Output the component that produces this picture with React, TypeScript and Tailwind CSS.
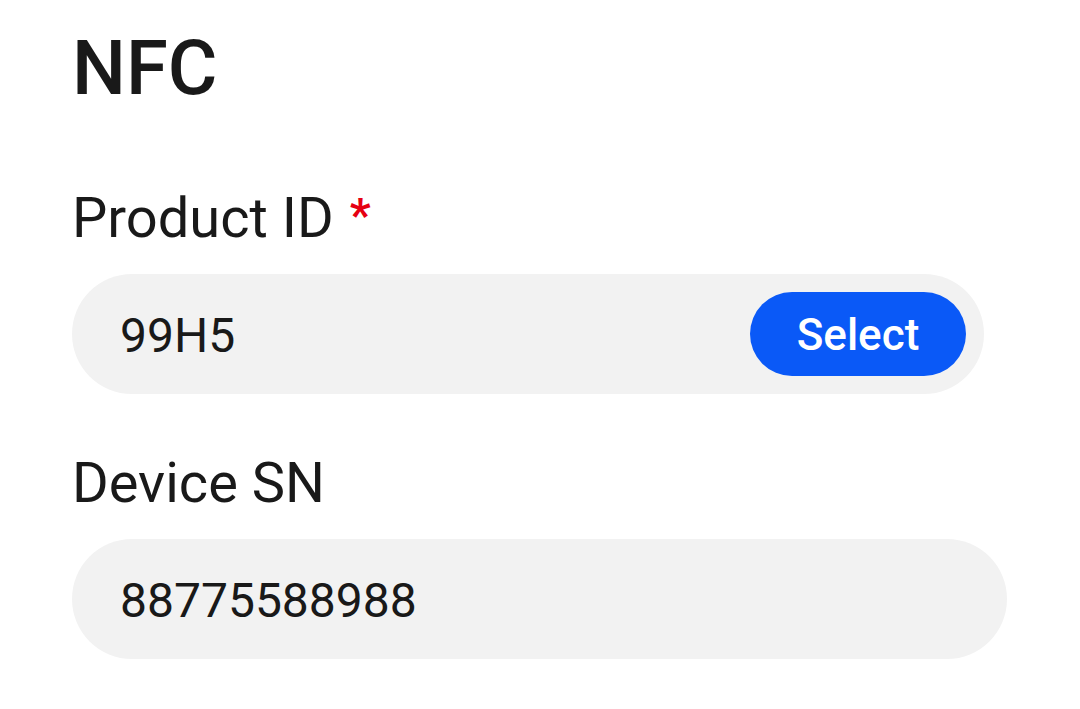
import React from 'react';

function Field({ label, required, value, action, width }: { label: string; required?: boolean; value: string; action?: string; width: string }) {
  return (
    <div>
      <div className="flex items-start text-[56px] leading-[56px] text-[#191919]">
        <span>{label}</span>
        {required && <span className="ml-[16px] mt-[2px] text-[46px] leading-[46px] font-bold text-[#e60012]">*</span>}
      </div>
      <div className={`mt-[28px] flex h-[120px] items-center justify-between rounded-full bg-[#f2f2f2] pl-[48px] pr-[18px] ${width}`}>
        <span className="pt-[4px] text-[48px] leading-none text-[#191919]">{value}</span>
        {action && (
          <button type="button" className="flex h-[84px] w-[216px] items-center justify-center rounded-full bg-[#0a59f7] pt-[2px] text-[44px] font-medium text-white">
            {action}
          </button>
        )}
      </div>
    </div>
  );
}

export default function App() {
  return (
    <div className="h-[709px] w-[1080px] bg-white pl-[72px] pt-[30px]" style={{ fontFamily: 'Roboto, "Noto Sans", sans-serif' }}>
      <h1 className="text-[76px] leading-[76px] font-medium text-[#191919]">NFC</h1>
      <div className="mt-[84px]">
        <Field label="Product ID" required value="99H5" action="Select" width="w-[912px]" />
      </div>
      <div className="mt-[61px]">
        <Field label="Device SN" value="88775588988" width="w-[935px]" />
      </div>
    </div>
  );
}
